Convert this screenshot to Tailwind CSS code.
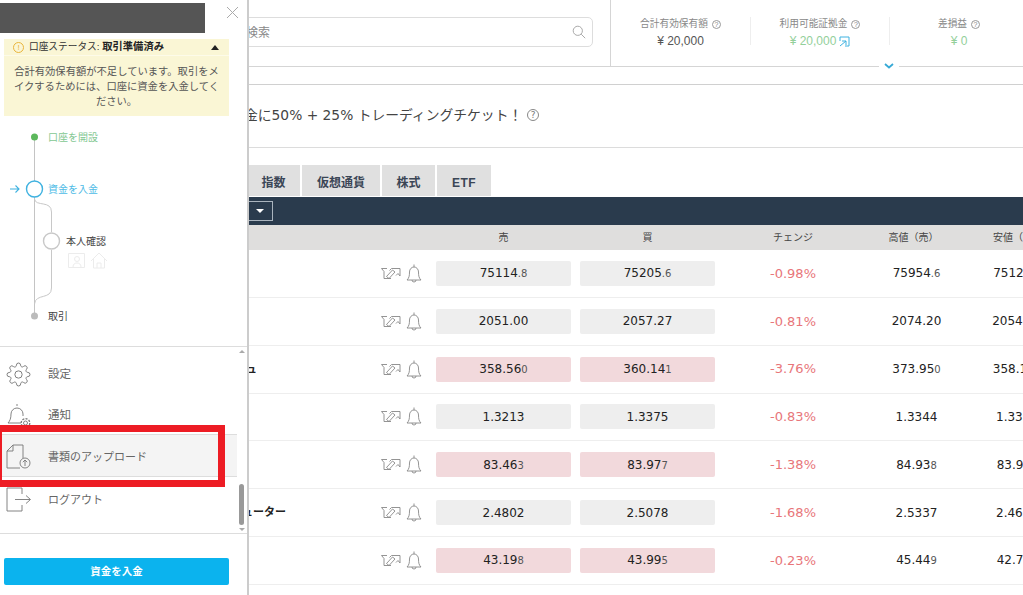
<!DOCTYPE html>
<html lang="ja">
<head>
<meta charset="UTF-8">
<title>口座</title>
<script src="https://cdn.jsdelivr.net/npm/@tailwindcss/browser@4"></script>
</head>
<body class="bg-white">
<div class="relative w-[1023px] h-[595px] overflow-hidden font-['Liberation_Sans','Noto_Sans_CJK_JP',sans-serif] text-[#333]">

  <!-- Main content (runs on under the drawer) -->
  <div class="w-[1100px]">
    <header class="relative flex h-[67px] border-b border-[#d5d5d5]">
      <div class="w-[611px] shrink-0 border-r border-[#d5d5d5] pl-[200px] pt-[17px]">
        <div class="w-[393px] h-[30px] border border-[#ddd] rounded-[5px] flex items-center justify-between pl-[45px] pr-[6px] text-[12px] text-[#888]">
          <span class="mt-[1px]">検索</span>
          <svg class="w-[14px] h-[14px]" viewBox="0 0 14 14" fill="none" stroke="#aaa" stroke-width="1"><circle cx="5.8" cy="5.8" r="4.6"/><path d="M9.2 9.2l4 4"/></svg>
        </div>
      </div>
      <div class="flex pt-[17px] items-start">
        <div class="w-[139px] h-[28px] flex flex-col items-center">
          <span class="flex items-center gap-[4px] text-[9.7px] text-[#888] leading-[14px]">合計有効保有額
            <span class="w-[9px] h-[9px] rounded-full border border-[#999] text-[7px] leading-[8px] text-center">?</span></span>
          <span class="text-[12px] text-[#555] leading-[20px]">¥ 20,000</span>
        </div>
        <div class="w-[139px] h-[28px] border-l border-[#eee] flex flex-col items-center">
          <span class="flex items-center gap-[4px] text-[9.7px] text-[#888] leading-[14px]">利用可能証拠金
            <span class="w-[9px] h-[9px] rounded-full border border-[#999] text-[7px] leading-[8px] text-center">?</span></span>
          <span class="flex items-center gap-[3px] text-[12px] text-[#93cf9a] leading-[20px]">¥ 20,000
            <svg class="w-[11px] h-[11px]" viewBox="0 0 11 11" fill="none" stroke="#3fb2e0" stroke-width="1"><path d="M1 5V1h9v9H6M3 5h4v4M7 5l-6 5"/></svg></span>
        </div>
        <div class="w-[139px] h-[28px] border-l border-[#eee] flex flex-col items-center">
          <span class="flex items-center gap-[4px] text-[9.7px] text-[#888] leading-[14px]">差損益
            <span class="w-[9px] h-[9px] rounded-full border border-[#999] text-[7px] leading-[8px] text-center">?</span></span>
          <span class="text-[12px] text-[#93cf9a] leading-[20px]">¥ 0</span>
        </div>
      </div>
      <div class="absolute left-[879px] top-[61px] w-[20px] h-[10px] bg-white flex items-center justify-center">
        <svg class="w-[10px] h-[6px]" viewBox="0 0 10 6" fill="none" stroke="#36a9d6" stroke-width="1.8"><path d="M1 1l4 3.5L9 1"/></svg>
      </div>
    </header>
    <div class="h-[18px] border-b border-[#d0d0d0]"></div>

    <div class="h-[63px] pb-[2px] border-b border-[#dcdcdc] flex items-center pl-[244px] text-[13.8px] text-[#444] font-['DejaVu_Sans','Noto_Sans_CJK_JP',sans-serif]">
      <span class="whitespace-nowrap">金に50% + 25% トレーディングチケット！</span>
      <span class="ml-[5px] w-[12px] h-[12px] rounded-full border border-[#888] text-[9px] leading-[11px] text-center text-[#777]">?</span>
    </div>

    <!-- Tabs -->
    <div class="flex gap-[2px] pl-[247px] mt-[17px] h-[31px] text-[12px] font-bold text-[#3b4656]">
      <div class="w-[53px] pt-[5px] bg-[#e0e0e0] flex items-center justify-center">指数</div>
      <div class="w-[78px] pt-[5px] bg-[#e0e0e0] flex items-center justify-center">仮想通貨</div>
      <div class="w-[53px] pt-[5px] bg-[#e0e0e0] flex items-center justify-center">株式</div>
      <div class="w-[54px] pt-[5px] bg-[#e0e0e0] flex items-center justify-center tracking-[0.5px]">ETF</div>
    </div>
    <div class="mt-[1px] h-[28px] bg-[#2a3b4d] flex items-center pl-[247px]">
      <div class="w-[26px] h-[20px] border border-[#aab4be] border-l-0 flex items-center justify-center">
        <span class="w-0 h-0 border-x-[4px] border-x-transparent border-t-[4px] border-t-white"></span>
      </div>
    </div>

    <!-- Table head -->
    <div class="h-[25px] bg-[#dfdedd] flex items-center text-[10px] text-[#444] whitespace-nowrap">
      <div class="w-[436px] shrink-0"></div>
      <div class="w-[135px] shrink-0 text-center">売</div>
      <div class="w-[9px] shrink-0"></div>
      <div class="w-[135px] shrink-0 text-center">買</div>
      <div class="w-[156px] shrink-0 text-center">チェンジ</div>
      <div class="w-[85px] shrink-0 text-center">高値（売）</div>
      <div class="pl-[37px] shrink-0">安値（売）</div>
    </div>

    <!-- Rows, filled in below -->
    <div id="rows"></div>
  </div>

  <!-- Drawer -->
  <aside class="absolute left-0 top-0 w-[249px] h-[595px] bg-white border-r-2 border-[#ccc] flex flex-col">
    <div class="h-[33px] pt-[3px] flex shrink-0">
      <div class="w-[205px] h-[30px] bg-[#555]"></div>
      <svg class="ml-[22px] mt-[4px] w-[11px] h-[11px]" viewBox="0 0 11 11" stroke="#aaa"><path d="M0 0l11 11M11 0L0 11"/></svg>
    </div>
    <div class="mx-[4px] mt-[6px] w-[225px] h-[77px] shrink-0 bg-[#faf6d5]">
      <div class="h-[17px] flex items-center pl-[9px] pr-[10px] text-[9.7px] text-[#333] border-b border-[#fdfbe9] whitespace-nowrap">
        <span class="w-[11px] h-[11px] rounded-full border border-[#eab53c] text-[8px] leading-[9px] text-center text-[#eab53c] mr-[5px]">!</span>
        口座ステータス:&nbsp;<b class="text-[10.3px] text-[#222]">取引準備済み</b>
        <span class="ml-auto w-0 h-0 border-x-[4px] border-x-transparent border-b-[5px] border-b-[#222]"></span>
      </div>
      <p class="px-[6px] mt-[8px] text-center text-[10.3px] leading-[15px] text-[#555]">合計有効保有額が不足しています。取引をメイクするためには、口座に資金を入金してください。</p>
    </div>

    <!-- Steps diagram -->
    <div class="relative h-[231px] shrink-0 border-b border-[#ddd] text-[10px] leading-[14px] whitespace-nowrap">
      <svg class="absolute left-0 top-0 w-[247px] h-[230px]" viewBox="0 0 247 230" fill="none">
        <path d="M34.5 24V65M34.5 81V200" stroke="#c4c4c4"/>
        <path d="M34.5 83c1 8 17 1 17 13v20M51.5 134v38c0 12-16 5-17 16" stroke="#c8c8c8"/>
        <circle cx="34.5" cy="21" r="3.5" fill="#5cb85c"/>
        <circle cx="34.5" cy="73" r="8" fill="#fff" stroke="#3fb2e0" stroke-width="1.4"/>
        <path d="M10 73h9M15.5 69.5L19 73l-3.5 3.5" stroke="#3fb2e0" stroke-width="1.1"/>
        <circle cx="51.5" cy="125" r="8" fill="#fff" stroke="#c8c8c8" stroke-width="1.4"/>
        <circle cx="34.5" cy="200" r="3.5" fill="#bbb"/>
        <path d="M68.5 137.500h16v14h-16zM73 151c0-3 2-4 4-4s4 1 4 4M79.500 143a2.500 2.500 0 11-5 0 2.500 2.500 0 015 0z" stroke="#ececec"/>
        <path d="M91 145l8-8 8 8M93.500 143v9h11v-9M97 152v-5h4v5" stroke="#ececec"/>
      </svg>
      <span class="absolute left-[48px] top-[15px] text-[#84c893]">口座を開設</span>
      <span class="absolute left-[48px] top-[67px] text-[#4dbbe6]">資金を入金</span>
      <span class="absolute left-[66px] top-[119px] text-[#444]">本人確認</span>
      <span class="absolute left-[48px] top-[194px] text-[#444]">取引</span>
    </div>

    <!-- Menu with scrollbar -->
    <div class="flex h-[187px] shrink-0 border-b border-[#ddd]">
      <div class="w-[237px] shrink-0 pt-[5px] text-[#666]">
        <div class="h-[42px] pt-[4px] flex items-center pl-[6px] gap-[17px] text-[11.5px]">
          <svg class="-mt-[2px] w-[25px] h-[25px] shrink-0" viewBox="0 0 24 24" fill="none" stroke="#777" stroke-width="0.9"><circle cx="12" cy="12" r="3.5"/><path d="M19.4 15a1.65 1.65 0 0 0 .33 1.82l.06.06a2 2 0 0 1 0 2.83 2 2 0 0 1-2.83 0l-.06-.06a1.65 1.65 0 0 0-1.82-.33 1.65 1.65 0 0 0-1 1.51V21a2 2 0 0 1-2 2 2 2 0 0 1-2-2v-.09A1.65 1.65 0 0 0 9 19.4a1.65 1.65 0 0 0-1.82.33l-.06.06a2 2 0 0 1-2.83 0 2 2 0 0 1 0-2.83l.06-.06a1.65 1.65 0 0 0 .33-1.82 1.65 1.65 0 0 0-1.51-1H3a2 2 0 0 1-2-2 2 2 0 0 1 2-2h.09A1.65 1.65 0 0 0 4.600 9a1.65 1.65 0 0 0-.33-1.82l-.06-.06a2 2 0 0 1 0-2.83 2 2 0 0 1 2.83 0l.06.06a1.65 1.65 0 0 0 1.82.33H9a1.65 1.65 0 0 0 1-1.51V3a2 2 0 0 1 2-2 2 2 0 0 1 2 2v.09a1.65 1.65 0 0 0 1 1.51 1.65 1.65 0 0 0 1.82-.33l.06-.06a2 2 0 0 1 2.83 0 2 2 0 0 1 0 2.83l-.06.06a1.65 1.65 0 0 0-.33 1.82V9a1.65 1.65 0 0 0 1.51 1H21a2 2 0 0 1 2 2 2 2 0 0 1-2 2h-.09a1.65 1.65 0 0 0-1.51 1z"/></svg>
          <span>設定</span>
        </div>
        <div class="h-[40px] pt-[4px] flex items-center pl-[6px] gap-[17px] text-[11.5px]">
          <svg class="-mt-[2px] w-[25px] h-[25px] shrink-0" viewBox="0 0 25 25" fill="none" stroke="#777" stroke-width="0.9"><path d="M11 1v2M2 20c2-2 3-5 3-9a6 6 0 0112 0v2M2 20h13"/><circle cx="19.500" cy="20" r="2"/><circle cx="19.500" cy="20" r="4.300" stroke-dasharray="2 1.300" stroke-width="1.300"/></svg>
          <span>通知</span>
        </div>
        <div class="h-[43px] pt-[4px] flex items-center pl-[6px] gap-[17px] text-[11px] bg-[#f4f4f4] border-y border-[#ddd]">
          <svg class="-mt-[2px] w-[25px] h-[26px] shrink-0" viewBox="0 0 25 26" fill="none" stroke="#777" stroke-width="0.9"><path d="M7 1h10v13M7 1L1 7v17h13M7 1v6H1"/><circle cx="19" cy="19" r="5" fill="#f4f4f4"/><path d="M19 22v-6M16.800 18.200L19 16l2.200 2.200"/></svg>
          <span>書類のアップロード</span>
        </div>
        <div class="h-[42px] pt-[4px] flex items-center pl-[6px] gap-[17px] text-[11px]">
          <svg class="-mt-[2px] w-[25px] h-[25px] shrink-0" viewBox="0 0 25 25" fill="none" stroke="#777" stroke-width="0.9"><path d="M16 7V1H1v23h15v-6"/><path d="M9 12.500h15M20 8.500l4.500 4-4.500 4"/></svg>
          <span>ログアウト</span>
        </div>
      </div>
      <div class="w-[9px] flex flex-col items-center pt-[3px] pb-[2px]">
        <span class="w-0 h-0 border-x-[3px] border-x-transparent border-b-[3px] border-b-[#aaa]"></span>
        <div class="flex-1"></div>
        <div class="w-[5px] h-[41px] rounded-[3px] bg-[#999]"></div>
        <span class="mt-[3px] w-0 h-0 border-x-[3px] border-x-transparent border-t-[3px] border-t-[#aaa]"></span>
      </div>
    </div>

    <div class="pt-[24px] px-[4px]">
      <button class="w-[225px] h-[27px] rounded-[2px] bg-[#0bb3ee] text-white text-[10.5px] font-bold">資金を入金</button>
    </div>

    <!-- Red annotation box over the menu -->
    <div class="absolute left-0 top-[425px] w-[225px] h-[62px] border-[7px] border-l-[2px] border-[#ed1c24]"></div>
  </aside>
</div>

<script>
  const grey = 'bg-[#eee]';
  const pink = 'bg-[#f2d9dc]';
  // name, name padding, tone, sell, buy, change, high, low
  const data = [
    ['', 'pr-[124px]', grey, '75114|.8', '75205|.6', '-0.98%', '75954|.6', '75124|.2'],
    ['', 'pr-[124px]', grey, '2051.00', '2057.27', '-0.81%', '2074.20', '2054.10'],
    ['ビットコインキャッシュ', 'pr-[124px]', pink, '358.56|0', '360.14|1', '-3.76%', '373.95|0', '358.12|0'],
    ['', 'pr-[124px]', grey, '1.3213', '1.3375', '-0.83%', '1.3344', '1.3320'],
    ['', 'pr-[124px]', pink, '83.46|3', '83.97|7', '-1.38%', '84.93|8', '83.91|2'],
    ['インターネットコンピューター', 'pr-[95px]', grey, '2.4802', '2.5078', '-1.68%', '2.5337', '2.4612'],
    ['', 'pr-[124px]', pink, '43.19|8', '43.99|5', '-0.23%', '45.44|9', '42.71|2'],
  ];

  const price = (v) => {
    const [big, small] = v.split('|');
    return big + (small ? '<span class="text-[10px] text-[#555]">' + small + '</span>' : '');
  };

  document.getElementById('rows').innerHTML = data.map((r) => `
    <div class="h-[47.85px] border-b border-[#eee] flex items-center text-[12px] text-[#222] whitespace-nowrap font-['DejaVu_Sans','Noto_Sans_CJK_JP',sans-serif]">
      <div class="w-[381px] shrink-0 text-right text-[11px] font-bold font-['Liberation_Sans','Noto_Sans_CJK_JP',sans-serif] ${r[1]}">${r[0]}</div>
      <svg class="w-[20px] h-[13px] shrink-0" viewBox="0 0 20 13" fill="none" stroke="#888" stroke-width="0.9"><path d="M6 1.500H.5l2.500 3v7h7M5.500 9.500l6-6.500 2.500 2-6 6.500zM8.500 3.500l2-2h8.500v7.500l-2-2.500-2 2"/></svg>
      <svg class="ml-[5px] w-[16px] h-[19px] shrink-0" viewBox="0 0 16 19" fill="none" stroke="#888" stroke-width="0.9"><path d="M8 .5v2.500M1 16c2-2 2.500-4 2.500-8a4.500 5 0 019 0c0 4 .5 6 2.500 8zM6 16a2 2 0 004 0"/></svg>
      <div class="ml-[14px] w-[135px] h-[25px] shrink-0 rounded-[2px] ${r[2]} flex items-center justify-center"><span>${price(r[3])}</span></div>
      <div class="ml-[9px] w-[135px] h-[25px] shrink-0 rounded-[2px] ${r[2]} flex items-center justify-center"><span>${price(r[4])}</span></div>
      <div class="w-[156px] shrink-0 text-center text-[13px] text-[#e8767a]">${r[5]}</div>
      <div class="w-[91px] shrink-0 text-center">${price(r[6])}</div>
      <div class="w-[110px] shrink-0 text-center">${price(r[7])}</div>
    </div>`).join('');
</script>
</body>
</html>
